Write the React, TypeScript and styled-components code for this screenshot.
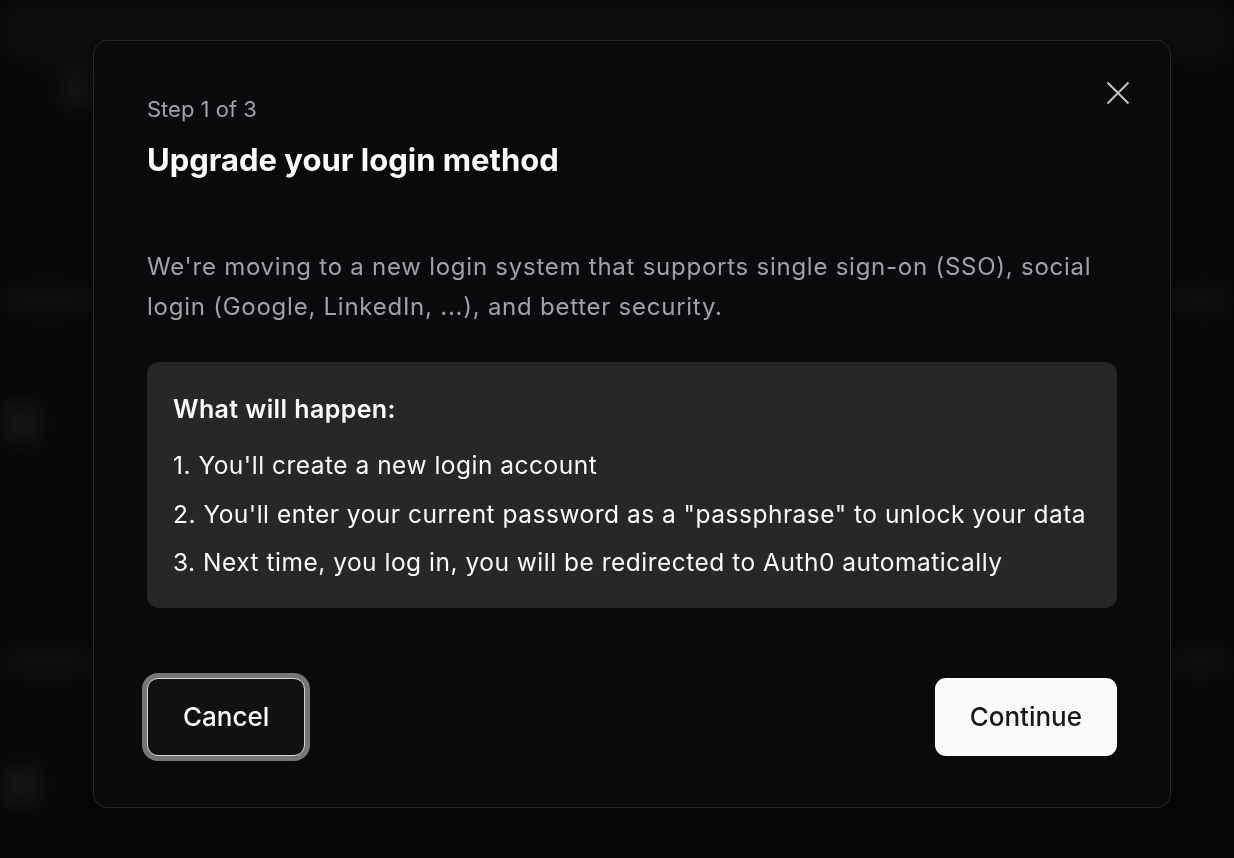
import React from 'react';
import styled, { createGlobalStyle } from 'styled-components';

const GlobalStyle = createGlobalStyle`
  html, body {
    margin: 0;
    padding: 0;
    background: #080808;
    overflow: hidden;
  }
  body {
    font-family: Inter, "Noto Sans", "Liberation Sans", sans-serif;
    -webkit-font-smoothing: antialiased;
  }
  * {
    box-sizing: border-box;
  }
`;

// blurred page behind the dialog
const Backdrop = styled.div`
  width: 1234px;
  height: 858px;
  background: #0a0a0a;
  filter: blur(14px);
  display: flex;
  flex-direction: column;
`;

const TopBar = styled.div`
  height: 64px;
  background: #131518;
  display: flex;
  align-items: flex-end;
  padding: 0 0 0 62px;
`;

const LogoBlob = styled.div`
  width: 40px;
  height: 40px;
  border-radius: 50%;
  background: #2a2a2a;
  margin-bottom: -46px;
`;

const Section = styled.div`
  display: flex;
  flex-direction: column;
  padding-top: ${(p: { $top: number }) => p.$top}px;
`;

const TextBar = styled.div`
  height: 22px;
  width: 100%;
  background: #1e1e1e;
`;

const Avatar = styled.div`
  width: 40px;
  height: 40px;
  border-radius: 50%;
  background: #2c2c2c;
  margin: 92px 0 0 0;
`;

const Overlay = styled.div`
  position: fixed;
  inset: 0;
  background: rgba(0, 0, 0, 0.35);
  padding: 40px 0 0 93px;
`;

const Modal = styled.div`
  position: relative;
  width: 1078px;
  height: 768px;
  background: #0a0a0c;
  border: 1px solid #2a2a2e;
  border-radius: 14px;
  padding: 52px 53px 53px 53px;
  display: flex;
  flex-direction: column;
  box-shadow: 0 10px 30px rgba(0, 0, 0, 0.5);
`;

const CloseButton = styled.button`
  position: absolute;
  top: 40px;
  right: 40px;
  width: 24px;
  height: 24px;
  padding: 0;
  border: none;
  background: transparent;
  color: #c4c4c8;
  display: flex;
  align-items: center;
  justify-content: center;
  cursor: pointer;
`;

const StepLabel = styled.p`
  margin: 0;
  font-size: 22px;
  line-height: 32px;
  color: #a1a1aa;
`;

const Title = styled.h2`
  margin: 17px 0 0 0;
  font-size: 31px;
  line-height: 36px;
  font-weight: 700;
  letter-spacing: 0;
  color: #fafafa;
`;

const Description = styled.p`
  margin: 69px 0 0 0;
  font-size: 24px;
  line-height: 40px;
  letter-spacing: 0.75px;
  color: #a1a1aa;
`;

const InfoBox = styled.div`
  margin-top: 35px;
  background: #27272a;
  border-radius: 12px;
  padding: 29px 27px 21px 26px;
  display: flex;
  flex-direction: column;
`;

const InfoHeading = styled.h3`
  margin: 0 0 14px 0;
  font-size: 25px;
  line-height: 36px;
  font-weight: 600;
  letter-spacing: 0.4px;
  color: #fafafa;
`;

const StepList = styled.ol`
  margin: 0;
  padding: 0;
  list-style: none;
`;

const StepItem = styled.li`
  font-size: 24.5px;
  line-height: 48.5px;
  letter-spacing: 0.5px;
  color: #fafafa;
`;

const Footer = styled.div`
  margin-top: 70px;
  display: flex;
  justify-content: space-between;
  align-items: center;
`;

const Button = styled.button<{ $primary?: boolean }>`
  height: 78px;
  padding: 0 35px;
  border-radius: 11px;
  font-family: inherit;
  font-size: 26px;
  font-weight: 500;
  cursor: pointer;
  background: ${(p) => (p.$primary ? '#fafafa' : '#111113')};
  color: ${(p) => (p.$primary ? '#18181b' : '#fafafa')};
  border: ${(p) => (p.$primary ? 'none' : '1.5px solid #d4d4d8')};
  box-shadow: ${(p) => (p.$primary ? 'none' : '0 0 0 5px #767678')};
`;

const steps = [
  "You'll create a new login account",
  'You\'ll enter your current password as a "passphrase" to unlock your data',
  'Next time, you log in, you will be redirected to Auth0 automatically',
];

const App: React.FC = () => {
  return (
    <>
      <GlobalStyle />
      <Backdrop>
        <TopBar>
          <LogoBlob />
        </TopBar>
        <Section $top={225}>
          <TextBar />
          <Avatar />
        </Section>
        <Section $top={208}>
          <TextBar />
          <Avatar />
        </Section>
      </Backdrop>
      <Overlay>
        <Modal role='dialog'>
          <CloseButton aria-label='Close'>
            <svg width='24' height='24' viewBox='0 0 24 24' fill='none'>
              <path d='M1.5 1.5 22.5 22.5M22.5 1.5 1.5 22.5' stroke='currentColor' strokeWidth='2' />
            </svg>
          </CloseButton>
          <StepLabel>Step 1 of 3</StepLabel>
          <Title>Upgrade your login method</Title>
          <Description>
            We're moving to a new login system that supports single sign-on (SSO), social login
            (Google, LinkedIn, ...), and better security.
          </Description>
          <InfoBox>
            <InfoHeading>What will happen:</InfoHeading>
            <StepList>
              {steps.map((s, i) => (
                <StepItem key={i}>
                  {i + 1}. {s}
                </StepItem>
              ))}
            </StepList>
          </InfoBox>
          <Footer>
            <Button>Cancel</Button>
            <Button $primary>Continue</Button>
          </Footer>
        </Modal>
      </Overlay>
    </>
  );
};

export default App;
